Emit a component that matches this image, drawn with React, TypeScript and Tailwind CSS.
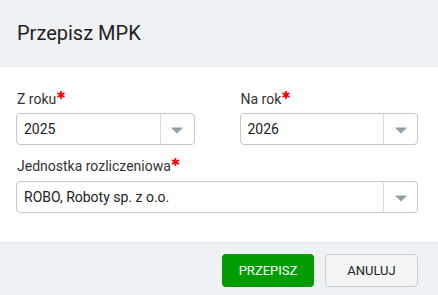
import React from "react";

function Caret() {
  return (
    <svg width="12" height="7" viewBox="0 0 12 7" className="block">
      <path d="M0 0.5 H12 L6 6.5 Z" fill="#8f9ea6" />
    </svg>
  );
}

function Select({ value }: { value: string }) {
  return (
    <div className="flex h-[32px] items-stretch rounded-[4px] border border-[#c6c6c6] bg-white">
      <div className="flex flex-1 items-center pl-[7px] text-[14px] text-[#222]">{value}</div>
      <div className="flex w-[34px] items-center justify-center border-l border-[#dcdcdc] pt-[3px]">
        <Caret />
      </div>
    </div>
  );
}

function Label({ text }: { text: string }) {
  return (
    <div className="flex h-[20px] items-center pl-[1px] text-[14px] leading-[20px] text-[#333]">
      <span>{text}</span>
      <span className="relative -top-[4px] text-[11px] leading-none text-[#f00] font-['DejaVu_Sans',sans-serif]">✱</span>
    </div>
  );
}

export default function App() {
  return (
    <div className="w-[438px] h-[295px] bg-white font-['Roboto',sans-serif] flex flex-col">
      <div className="flex h-[67px] items-center border-b border-[#e3e7ea] bg-[#eff2f4] px-[17px]">
        <span className="text-[20px] text-[#222] pb-[1px]">Przepisz MPK</span>
      </div>
      <div className="flex flex-col pl-[16px] pr-[20px] pt-[22px]">
        <div className="grid grid-cols-2 gap-x-[45px]">
          <div className="flex flex-col gap-[4px]">
            <Label text="Z roku" />
            <Select value="2025" />
          </div>
          <div className="flex flex-col gap-[4px]">
            <Label text="Na rok" />
            <Select value="2026" />
          </div>
        </div>
        <div className="mt-[11px] flex flex-col gap-[5px]">
          <Label text="Jednostka rozliczeniowa" />
          <Select value="ROBO, Roboty sp. z o.o." />
        </div>
      </div>
      <div className="mt-auto flex h-[53px] items-start justify-end gap-[11px] border-t border-[#e3e7ea] bg-[#eff2f4] pr-[20px] pt-[11px]">
        <button className="flex h-[33px] w-[92px] items-center justify-center rounded-[4px] bg-[#009c00] text-[13px] font-normal text-white">
          PRZEPISZ
        </button>
        <button className="flex h-[33px] w-[93px] items-center justify-center rounded-[4px] border border-[#cdd1d4] bg-[#f2f4f6] text-[13px] font-normal text-[#222]">
          ANULUJ
        </button>
      </div>
    </div>
  );
}
